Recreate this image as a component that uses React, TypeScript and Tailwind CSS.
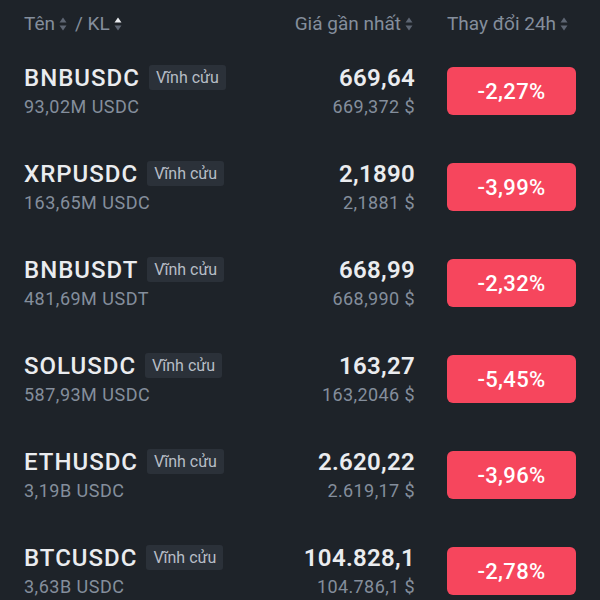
const rows = [
  { sym: "BNBUSDC", vol: "93,02M USDC", price: "669,64", usd: "669,372 $", chg: "-2,27%" },
  { sym: "XRPUSDC", vol: "163,65M USDC", price: "2,1890", usd: "2,1881 $", chg: "-3,99%" },
  { sym: "BNBUSDT", vol: "481,69M USDT", price: "668,99", usd: "668,990 $", chg: "-2,32%" },
  { sym: "SOLUSDC", vol: "587,93M USDC", price: "163,27", usd: "163,2046 $", chg: "-5,45%" },
  { sym: "ETHUSDC", vol: "3,19B USDC", price: "2.620,22", usd: "2.619,17 $", chg: "-3,96%" },
  { sym: "BTCUSDC", vol: "3,63B USDC", price: "104.828,1", usd: "104.786,1 $", chg: "-2,78%" },
];

function SortIcon({ active = false }: { active?: boolean }) {
  return (
    <svg width="8" height="14" viewBox="0 0 8 14" className="ml-[4px]">
      <path d="M4 0.5 L7.5 5.5 H0.5 Z" fill={active ? "#eaecef" : "#5e6673"} />
      <path d="M4 13.5 L7.5 8.5 H0.5 Z" fill="#5e6673" />
    </svg>
  );
}

export default function App() {
  return (
    <div
      className="w-[600px] h-[600px] overflow-hidden bg-[#1e2329]"
      style={{ fontFamily: "Roboto, 'Noto Sans', sans-serif" }}
    >
      <div className="h-[43px] pt-[5px] px-6 flex items-center text-[19px] text-[#848e9c]">
        <div className="flex items-center flex-1">
          <span>Tên</span>
          <SortIcon />
          <span className="ml-[8px]">/ KL</span>
          <SortIcon active />
        </div>
        <div className="flex items-center">
          <span>Giá gần nhất</span>
          <SortIcon />
        </div>
        <div className="flex items-center ml-[34px] w-[129px]">
          <span>Thay đổi 24h</span>
          <SortIcon />
        </div>
      </div>
      {rows.map((r) => (
        <div key={r.sym} className="h-[96px] px-6 flex items-center">
          <div className="flex-1 flex flex-col">
            <div className="flex items-center h-[28px]">
              <span className="text-[24px] font-medium text-[#eaecef] tracking-[1px]">{r.sym}</span>
              <span className="ml-[9px] h-[25px] px-[7px] flex items-center rounded-[3px] bg-[#2b3139] text-[16px] text-[#b7bdc6]">
                Vĩnh cửu
              </span>
            </div>
            <span className="mt-[3px] h-[24px] leading-[24px] text-[18px] text-[#848e9c] tracking-[0.5px]">{r.vol}</span>
          </div>
          <div className="flex flex-col items-end">
            <span className="h-[28px] leading-[28px] text-[24px] font-semibold text-[#eaecef] tracking-[0.3px]">{r.price}</span>
            <span className="mt-[3px] h-[24px] leading-[24px] text-[18px] text-[#848e9c] tracking-[0.4px]">{r.usd}</span>
          </div>
          <div className="ml-[32px] w-[129px] h-[48px] rounded-[6px] bg-[#f6465d] flex items-center justify-center text-[22px] font-medium text-white tracking-[0.3px]">
            {r.chg}
          </div>
        </div>
      ))}
    </div>
  );
}
